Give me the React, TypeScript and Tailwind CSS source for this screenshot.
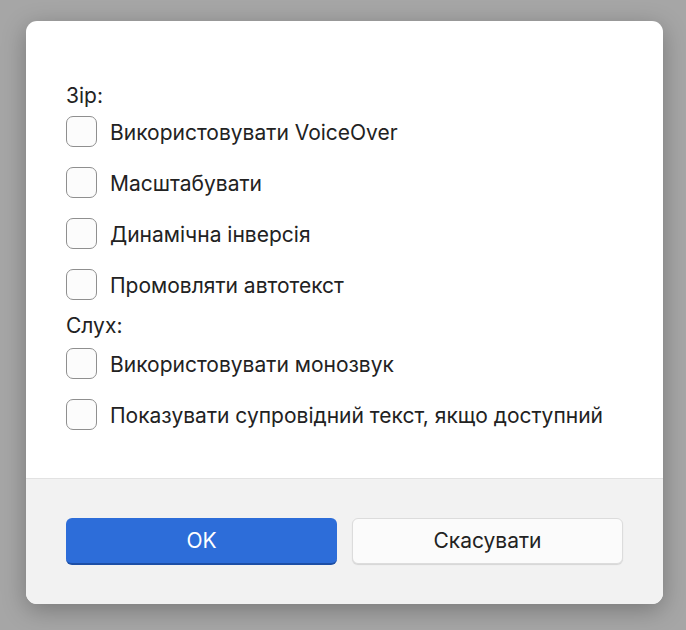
import React from "react";

const vision = [
  "Використовувати VoiceOver",
  "Масштабувати",
  "Динамічна інверсія",
  "Промовляти автотекст",
];

const hearing = [
  "Використовувати монозвук",
  "Показувати супровідний текст, якщо доступний",
];

function CheckRow({ label }: { label: string }) {
  return (
    <label className="flex h-[31px] items-center gap-[13px]">
      <span className="h-[31px] w-[31px] shrink-0 rounded-[7px] border-[1.5px] border-[#8f8f8f] bg-[#fcfcfc]" />
      <span className="pt-[2px] text-[21px] leading-6 text-[#222]">{label}</span>
    </label>
  );
}

export default function App() {
  return (
    <div
      className="min-h-[630px] w-full bg-[#a6a6a6] pl-[26px] pt-[21px]"
      style={{ fontFamily: "Inter, 'Noto Sans', sans-serif" }}
    >
      <div className="w-[637px] overflow-hidden rounded-[11px] bg-white shadow-[0_6px_24px_rgba(0,0,0,0.28)]">
        {/* options */}
        <div className="px-10 pb-12 pt-[63px]">
          <div className="text-[21px] leading-6 text-[#222]">Зір:</div>
          <div className="mt-2 flex flex-col gap-5">
            {vision.map((v) => (
              <CheckRow key={v} label={v} />
            ))}
          </div>
          <div className="mt-[14px] text-[21px] leading-6 text-[#222]">Слух:</div>
          <div className="mt-[10px] flex flex-col gap-5">
            {hearing.map((v) => (
              <CheckRow key={v} label={v} />
            ))}
          </div>
        </div>

        {/* footer */}
        <div className="flex gap-[15px] border-t border-[#e2e2e2] bg-[#f2f2f2] px-10 pb-[39px] pt-[39px]">
          <button className="h-[47px] w-[271px] rounded-[6px] border-b-2 border-[#1d4fa6] bg-[#2d6dd9] text-[21px] text-white">
            OK
          </button>
          <button className="h-[46px] w-[271px] rounded-[6px] border border-[#dcdcdc] bg-[#fbfbfb] text-[21px] text-[#222] shadow-[0_1px_1px_rgba(0,0,0,0.12)]">
            Скасувати
          </button>
        </div>
      </div>
    </div>
  );
}
